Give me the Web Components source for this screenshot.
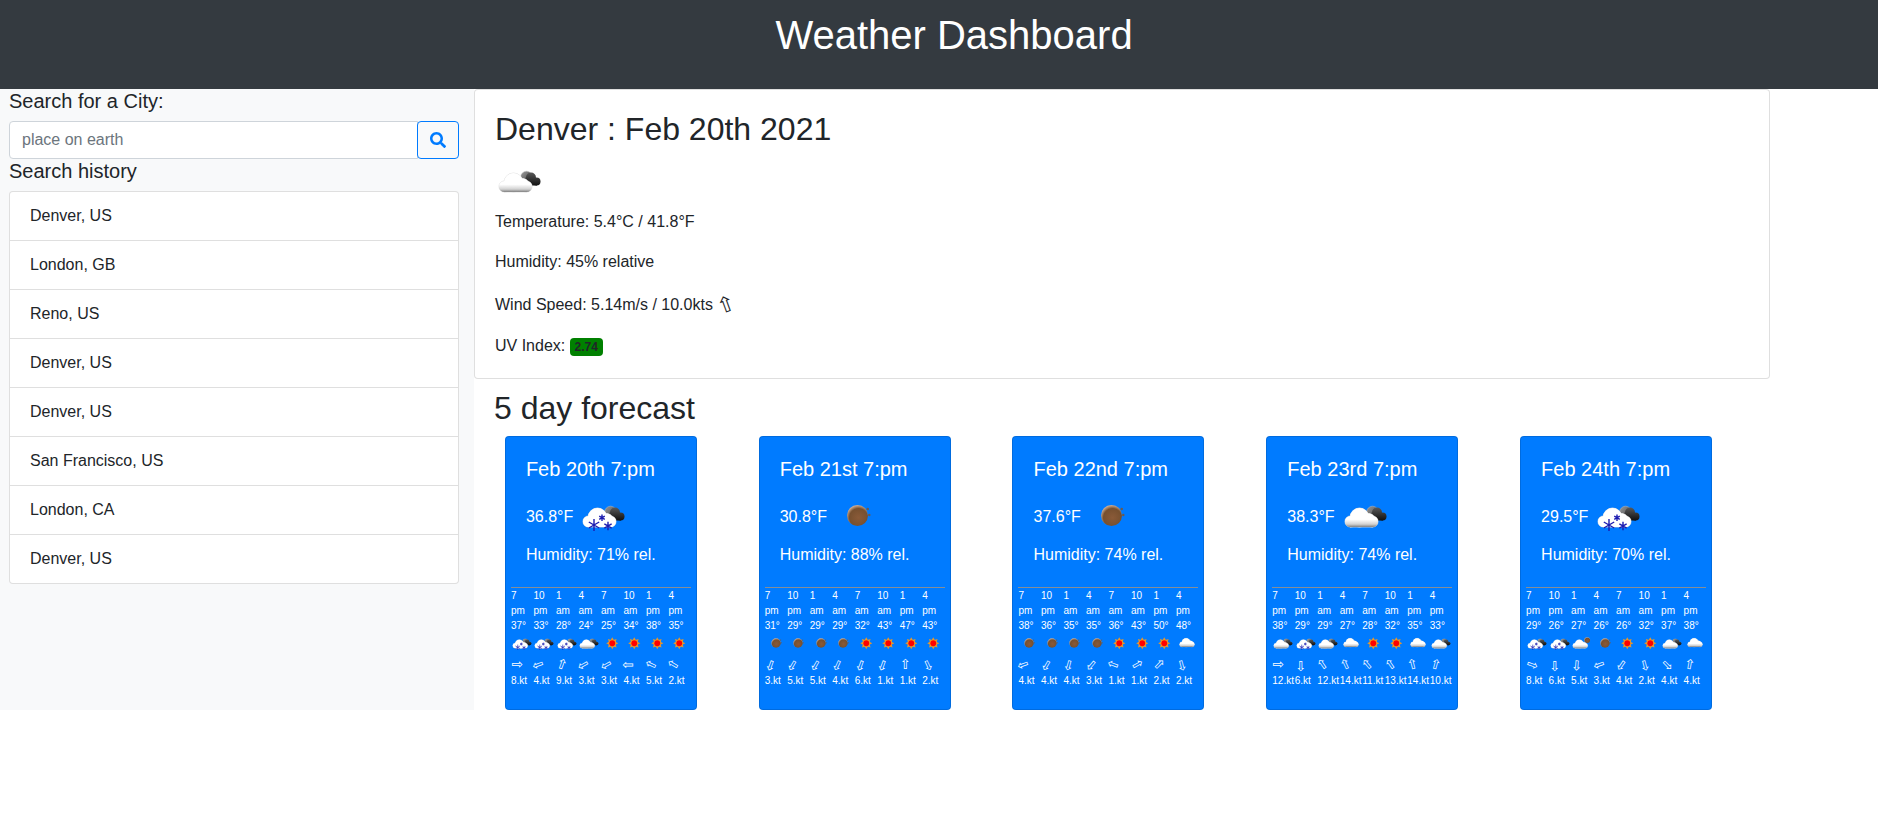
<!DOCTYPE html>
<html lang="en">
<head>
<meta charset="utf-8">
<title>Weather Dashboard</title>
<style>
  html, body { margin: 0; padding: 0; background: #fff; }
  body {
    font-family: "Liberation Sans", "DejaVu Sans", sans-serif;
    font-size: 16px;
    line-height: 1.5;
    color: #212529;
  }
</style>
</head>
<body>
<weather-app>
  <weather-header slot="header" title="Weather Dashboard"></weather-header>

  <side-bar slot="side">
    <city-search></city-search>
    <history-list>
      <history-item>Denver, US</history-item>
      <history-item>London, GB</history-item>
      <history-item>Reno, US</history-item>
      <history-item>Denver, US</history-item>
      <history-item>Denver, US</history-item>
      <history-item>San Francisco, US</history-item>
      <history-item>London, CA</history-item>
      <history-item>Denver, US</history-item>
    </history-list>
  </side-bar>

  <current-weather slot="main"></current-weather>

  <forecast-row slot="main">
    <forecast-card date="Feb 20th 7:pm" temp="36.8°F" icon="snow" hum="71"
      temps="37,33,28,24,25,34,38,35"
      icons="snow,snow,snow,cloudn,sun,sun,sun,sun"
      winds="90,250,20,240,240,270,295,300"
      kts="8,4,9,3,3,4,5,2"></forecast-card>
    <forecast-card date="Feb 21st 7:pm" temp="30.8°F" icon="moon" hum="88"
      temps="31,29,29,29,32,43,47,43"
      icons="moon,moon,moon,moon,sun,sun,sun,sun"
      winds="200,210,210,205,200,200,0,155"
      kts="3,5,5,4,6,1,1,2"></forecast-card>
    <forecast-card date="Feb 22nd 7:pm" temp="37.6°F" icon="moon" hum="74"
      temps="38,36,35,35,36,43,50,48"
      icons="moon,moon,moon,moon,sun,sun,sun,cloud"
      winds="250,210,195,220,290,60,45,165"
      kts="4,4,4,3,1,1,2,2"></forecast-card>
    <forecast-card date="Feb 23rd 7:pm" temp="38.3°F" icon="cloudn" hum="74"
      temps="38,29,29,27,28,32,35,33"
      icons="cloudn,snow,cloudn,cloud,sun,sun,cloud,cloudn"
      winds="90,180,325,335,320,325,345,15"
      kts="12,6,12,14,11,13,14,10"></forecast-card>
    <forecast-card date="Feb 24th 7:pm" temp="29.5°F" icon="snow" hum="70"
      temps="29,26,27,26,26,32,37,38"
      icons="snow,snow,cloudball,moon,sun,sun,cloudn,cloud"
      winds="110,180,185,250,215,165,135,10"
      kts="8,6,5,3,4,2,4,4"></forecast-card>
  </forecast-row>
</weather-app>

<script>
// svg bits for the weather icons, everything drawn in a 50x50 box
const DARK_CLOUD = `
  <circle cx="31.500" cy="21" r="5.800" fill="url(#moonlit)" stroke="#b8b8b8" stroke-width=".5"/>
  <g fill="url(#dark)">
    <circle cx="36" cy="21.500" r="5"/>
    <circle cx="41.500" cy="25.500" r="4"/>
    <circle cx="32" cy="25.500" r="4"/>
    <rect x="32" y="25" width="10" height="4.500"/>
  </g>`;

const cloudBits = `
    <circle cx="9.500" cy="30.500" r="5.500"/>
    <circle cx="18.500" cy="26.500" r="9.500"/>
    <circle cx="28" cy="28" r="5.500"/>
    <circle cx="31.500" cy="30.500" r="5.500"/>
    <rect x="9.500" y="26" width="22" height="10"/>`;

// the grey layer under the fill gives the thin rim the cloud has on white
const cloudShape = fill => `
  <g fill="#ddd" stroke="#ddd" stroke-width=".8">${cloudBits}</g>
  <g fill="${fill}">${cloudBits}</g>`;

function flake(x, y, r) {
  let d = "";
  for (const a of [0, 60, 120]) {
    const dx = r * Math.sin(a * Math.PI / 180);
    const dy = r * Math.cos(a * Math.PI / 180);
    d += `M${(x - dx).toFixed(2)} ${(y - dy).toFixed(2)}L${(x + dx).toFixed(2)} ${(y + dy).toFixed(2)}`;
  }
  return `<path d="${d}" stroke="#1c1cb0" stroke-width="1.400" fill="none"/>`;
}

function sunSpikes() {
  let s = "";
  for (let a = 0; a < 360; a += 45) {
    s += `<path d="M21.500 18L25 11.500L28.500 18Z" fill="#e8952b" transform="rotate(${a} 25 25)"/>`;
  }
  return s;
}

const ICONS = {
  cloudn: DARK_CLOUD + cloudShape("url(#white)"),
  cloud: `<g transform="translate(4 -3)">${cloudShape("url(#white)")}</g>`,
  cloudball: `<circle cx="36" cy="18" r="6.500" fill="url(#ball)"/>` + cloudShape("url(#white)"),
  snow: DARK_CLOUD + cloudShape("#fff") + flake(15, 34, 6) + flake(23, 26.7, 3.2) + flake(29, 35, 4.2),
  moon: `<circle cx="24.500" cy="24.500" r="10.500" fill="url(#ball)"/>
         <circle cx="34.700" cy="18" r="1.300" fill="#6b5a50"/><circle cx="36.300" cy="24" r="1.200" fill="#6b5a50"/>`,
  sun: sunSpikes() + `<circle cx="25" cy="25" r="8" fill="#f5a623"/><circle cx="25" cy="25" r="6.500" fill="#f00"/>`
};

class WxIcon extends HTMLElement {
  connectedCallback() {
    const root = this.shadowRoot || this.attachShadow({ mode: "open" });
    root.innerHTML = `
      <style>
        :host { display: block; width: 50px; height: 50px; }
        svg { display: block; width: 100%; height: 100%; overflow: visible; }
      </style>
      <svg viewBox="0 0 50 50" aria-hidden="true">
        <defs>
          <linearGradient id="white" gradientUnits="userSpaceOnUse" x1="0" y1="17" x2="0" y2="36">
            <stop offset="0" stop-color="#fff"/>
            <stop offset=".6" stop-color="#fff"/>
            <stop offset=".85" stop-color="#d2d2d2"/>
            <stop offset="1" stop-color="#808080"/>
          </linearGradient>
          <linearGradient id="dark" gradientUnits="userSpaceOnUse" x1="0" y1="16" x2="0" y2="30">
            <stop offset="0" stop-color="#5c5c5c"/>
            <stop offset="1" stop-color="#0d0d0d"/>
          </linearGradient>
          <linearGradient id="moonlit" x1="0" y1="0" x2="1" y2="1">
            <stop offset="0" stop-color="#9a9a9a"/>
            <stop offset="1" stop-color="#444"/>
          </linearGradient>
          <radialGradient id="ball" cx=".55" cy=".6" r=".6">
            <stop offset="0" stop-color="#8a5a38"/>
            <stop offset=".72" stop-color="#77502f"/>
            <stop offset="1" stop-color="#d0b098"/>
          </radialGradient>
        </defs>
        ${ICONS[this.getAttribute("kind")] || ""}
      </svg>`;
  }
}
customElements.define("wx-icon", WxIcon);

class WindArrow extends HTMLElement {
  connectedCallback() {
    const root = this.shadowRoot || this.attachShadow({ mode: "open" });
    root.innerHTML = `
      <style>
        :host { display: inline-block; font-family: "DejaVu Sans", sans-serif; font-size: 1.350em; line-height: 1; }
        span { display: inline-block; transform: rotate(${this.getAttribute("deg") || 0}deg); }
      </style>
      <span>⇧</span>`;
  }
}
customElements.define("wind-arrow", WindArrow);

class WeatherApp extends HTMLElement {
  constructor() {
    super();
    this.attachShadow({ mode: "open" });
    this.shadowRoot.innerHTML = `
      <style>
        :host { display: block; }
        .cols { display: grid; grid-template-columns: 474px 1296px; }
        .main { display: block; min-width: 0; }
      </style>
      <slot name="header"></slot>
      <div class="cols">
        <slot name="side"></slot>
        <div class="main"><slot name="main"></slot></div>
      </div>`;
  }
}
customElements.define("weather-app", WeatherApp);

class WeatherHeader extends HTMLElement {
  connectedCallback() {
    const root = this.shadowRoot || this.attachShadow({ mode: "open" });
    root.innerHTML = `
      <style>
        :host { display: block; height: 89px; box-sizing: border-box; background: #343a40; padding: 11px 0 0 30px; }
        h1 { margin: 0; font-size: 40px; font-weight: 400; line-height: 1.2; color: #fff; text-align: center; }
      </style>
      <h1>${this.getAttribute("title")}</h1>`;
  }
}
customElements.define("weather-header", WeatherHeader);

class SideBar extends HTMLElement {
  constructor() {
    super();
    this.attachShadow({ mode: "open" });
    this.shadowRoot.innerHTML = `
      <style>
        :host { display: block; background: #f8f9fa; padding: 0 15px 0 9px; }
      </style>
      <slot></slot>`;
  }
}
customElements.define("side-bar", SideBar);

class CitySearch extends HTMLElement {
  constructor() {
    super();
    this.attachShadow({ mode: "open" });
    this.shadowRoot.innerHTML = `
      <style>
        :host { display: block; }
        label { display: block; font-size: 20px; line-height: 24px; margin-bottom: 8px; }
        .group { display: flex; height: 38px; }
        input {
          flex: 1 1 auto; min-width: 0; box-sizing: border-box;
          font: inherit; color: #495057; background: #fff;
          padding: 6px 12px; border: 1px solid #ced4da;
          border-radius: 4px 0 0 4px; outline: none;
        }
        input::placeholder { color: #6c757d; opacity: 1; }
        button {
          flex: 0 0 42px; box-sizing: border-box; margin-left: -1px; padding: 0;
          display: flex; align-items: center; justify-content: center;
          background: #f8f9fa; border: 1px solid #007bff; border-radius: 4px;
        }
        svg { width: 16px; height: 16px; fill: #007bff; }
      </style>
      <label for="city">Search for a City:</label>
      <div class="group">
        <input id="city" type="text" placeholder="place on earth">
        <button type="button" aria-label="search">
          <svg viewBox="0 0 512 512"><path d="M505 442.700L405.300 343c-4.500-4.500-10.600-7-17-7H372c27.600-35.300 44-79.700 44-128C416 93.100 322.900 0 208 0S0 93.100 0 208s93.100 208 208 208c48.300 0 92.700-16.400 128-44v16.300c0 6.400 2.500 12.500 7 17l99.700 99.700c9.400 9.400 24.600 9.400 33.900 0l28.300-28.300c9.400-9.400 9.400-24.600.1-34zM208 336c-70.700 0-128-57.200-128-128 0-70.700 57.200-128 128-128 70.700 0 128 57.200 128 128 0 70.700-57.200 128-128 128z"/></svg>
        </button>
      </div>`;
  }
}
customElements.define("city-search", CitySearch);

class HistoryList extends HTMLElement {
  constructor() {
    super();
    this.attachShadow({ mode: "open" });
    this.shadowRoot.innerHTML = `
      <style>
        :host { display: block; }
        h2 { margin: 0 0 8px; font-size: 20px; font-weight: 400; line-height: 24px; }
        .list {
          display: flex; flex-direction: column;
          background: #fff; border: 1px solid rgba(0,0,0,.125); border-radius: 4px;
        }
        ::slotted(history-item:not(:first-child)) { border-top: 1px solid rgba(0,0,0,.125); }
      </style>
      <h2>Search history</h2>
      <div class="list"><slot></slot></div>`;
  }
}
customElements.define("history-list", HistoryList);

class HistoryItem extends HTMLElement {
  constructor() {
    super();
    this.attachShadow({ mode: "open" });
    this.shadowRoot.innerHTML = `
      <style>
        :host { display: block; padding: 12px 20px; }
      </style>
      <slot></slot>`;
  }
}
customElements.define("history-item", HistoryItem);

class CurrentWeather extends HTMLElement {
  constructor() {
    super();
    this.attachShadow({ mode: "open" });
    this.shadowRoot.innerHTML = `
      <style>
        :host {
          display: block; box-sizing: border-box; padding: 20px;
          background: #fff; border: 1px solid rgba(0,0,0,.125); border-radius: 4px;
        }
        h2 { margin: 0 0 8px; font-size: 32px; font-weight: 400; line-height: 1.2; }
        wx-icon { margin-bottom: 3.600px; }
        p { margin: 0 0 16px; }
        p:last-child { margin: 0; }
        .wind { height: 29px; margin-bottom: 15px; display: flex; align-items: center; gap: 4px; padding-top: 1px; box-sizing: border-box; }
        .uv {
          display: inline-block; padding: 3px 4.800px; font-size: 12px; font-weight: 700;
          line-height: 1; vertical-align: baseline; background: green; border-radius: 4px;
        }
      </style>
      <h2>Denver : Feb 20th 2021</h2>
      <wx-icon kind="cloudn"></wx-icon>
      <p>Temperature: 5.4°C / 41.8°F</p>
      <p>Humidity: 45% relative</p>
      <p class="wind">Wind Speed: 5.14m/s / 10.0kts <wind-arrow deg="340"></wind-arrow></p>
      <p>UV Index: <span class="uv">2.74</span></p>`;
  }
}
customElements.define("current-weather", CurrentWeather);

class ForecastRow extends HTMLElement {
  constructor() {
    super();
    this.attachShadow({ mode: "open" });
    this.shadowRoot.innerHTML = `
      <style>
        :host { display: block; width: 1269px; padding: 10.200px 0 .4px; }
        h2 { margin: 0 0 8px 20px; font-size: 32px; font-weight: 400; line-height: 1.2; }
        .row { display: flex; justify-content: space-around; }
      </style>
      <h2>5 day forecast</h2>
      <div class="row"><slot></slot></div>`;
  }
}
customElements.define("forecast-row", ForecastRow);

const HOURS = [["7", "pm"], ["10", "pm"], ["1", "am"], ["4", "am"], ["7", "am"], ["10", "am"], ["1", "pm"], ["4", "pm"]];

class ForecastCard extends HTMLElement {
  connectedCallback() {
    const root = this.shadowRoot || this.attachShadow({ mode: "open" });
    const get = n => this.getAttribute(n);
    const temps = get("temps").split(",");
    const icons = get("icons").split(",");
    const winds = get("winds").split(",");
    const kts = get("kts").split(",");
    const cols = HOURS.map((h, i) => `
      <span>${h[0]}</span><span>${h[1]}</span><span>${temps[i]}°</span>
      <wx-icon kind="${icons[i]}"></wx-icon>
      <span class="arrow"><wind-arrow deg="${winds[i]}"></wind-arrow></span>
      <span>${kts[i]}.kt</span>`).join("");
    root.innerHTML = `
      <style>
        :host {
          display: block; flex: 0 0 192px; box-sizing: border-box; height: 274px; padding: 20px;
          color: #fff; background: #007bff; border: 1px solid rgba(0,0,0,.125); border-radius: 4px;
        }
        h5 { margin: 0 0 12px; font-size: 20px; font-weight: 400; line-height: 1.2; }
        .temp { display: flex; align-items: center; gap: 6px; height: 48px; margin-bottom: 2.500px; }
        .temp wx-icon { flex: 0 0 50px; margin-top: -1px; }
        .hum { margin: 0 0 20px; }
        hr { margin: 0 -15px; border: 0; border-top: 1px solid #868e96; }
        .strip {
          display: grid; margin: 0 -15px; font-size: 10px; line-height: 15px;
          grid-auto-flow: column;
          grid-template-columns: repeat(8, 22.500px);
          grid-template-rows: 15px 15px 15px 21.500px 18.500px 15px;
          white-space: nowrap;
        }
        .strip wx-icon { width: 22.500px; height: 22.500px; margin-top: -1px; }
        .arrow { display: flex; align-items: center; padding-top: 1px; }
      </style>
      <h5>${get("date")}</h5>
      <div class="temp">${get("temp")} <wx-icon kind="${get("icon")}"></wx-icon></div>
      <p class="hum">Humidity: ${get("hum")}% rel.</p>
      <hr>
      <div class="strip">${cols}</div>`;
  }
}
customElements.define("forecast-card", ForecastCard);
</script>
</body>
</html>
